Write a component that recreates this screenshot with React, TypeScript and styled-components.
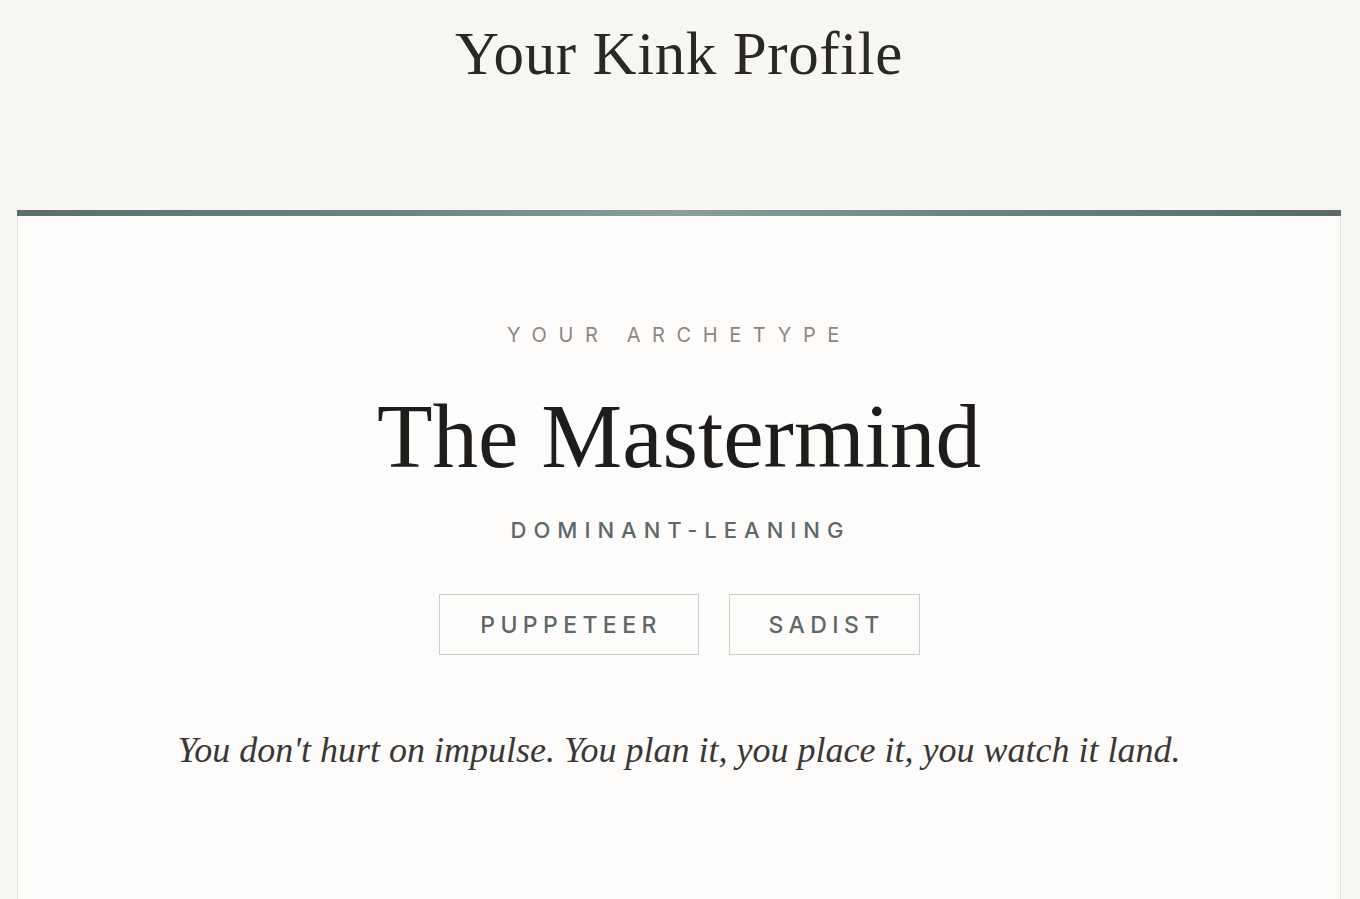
import React from "react";
import styled, { createGlobalStyle } from "styled-components";

const Global = createGlobalStyle`
  html, body { margin: 0; padding: 0; background: #f8f6f3; }
  body { font-family: "Liberation Serif", serif; }
`;

const Page = styled.div`
  min-height: 899px;
  padding: 0 19px 0 17px;
  display: flex;
  flex-direction: column;
  align-items: stretch;
`;

const PageTitle = styled.h1`
  margin: 22px 0 0;
  text-align: center;
  font-family: "Liberation Serif", serif;
  font-weight: 400;
  font-size: 61px;
  line-height: 64px;
  color: #2a2826;
  letter-spacing: 0.6px;
`;

const Card = styled.section`
  margin-top: 124px;
  background: #fdfcfa;
  border: 1px solid #e6e3de;
  border-top: none;
  position: relative;
  min-height: 690px;
  display: flex;
  flex-direction: column;
  align-items: center;
  &::before {
    content: "";
    position: absolute;
    left: -1px;
    right: -1px;
    top: 0;
    height: 6px;
    background: linear-gradient(90deg, #5a6e6e 0%, #6f8585 30%, #8a9e9e 50%, #6f8585 70%, #566a6a 100%);
  }
`;

const Eyebrow = styled.div`
  margin-top: 113px;
  font-family: "Inter", sans-serif;
  font-size: 20px;
  line-height: 24px;
  letter-spacing: 11.6px;
  color: #8c8782;
  text-transform: uppercase;
`;

const Archetype = styled.h2`
  margin: 40px 0 0;
  font-family: "Liberation Serif", serif;
  font-weight: 400;
  font-size: 91px;
  line-height: 100px;
  color: #1f1d1b;
`;

const Leaning = styled.div`
  margin-top: 30px;
  font-family: "Inter", sans-serif;
  font-size: 22px;
  line-height: 26px;
  font-weight: 500;
  letter-spacing: 7px;
  color: #5d6868;
  padding-left: 3px;
`;

const Tags = styled.div`
  margin-top: 51px;
  display: flex;
  gap: 30px;
`;

const Tag = styled.span<{ $w: number }>`
  width: ${(p) => p.$w}px;
  height: 61px;
  box-sizing: border-box;
  border: 1px solid #cfcdca;
  display: flex;
  align-items: center;
  justify-content: center;
  font-family: "Inter", sans-serif;
  font-size: 23px;
  font-weight: 500;
  letter-spacing: 5.4px;
  color: #5e6868;
  padding-left: 5px;
`;

const Quote = styled.p`
  margin: 73px 0 0;
  font-family: "Liberation Serif", serif;
  font-style: italic;
  font-size: 36px;
  line-height: 44px;
  color: #3a3836;
  text-align: center;
`;

export default function App() {
  return (
    <>
      <Global />
      <Page>
        <PageTitle>Your Kink Profile</PageTitle>
        <Card>
          <Eyebrow>Your Archetype</Eyebrow>
          <Archetype>The Mastermind</Archetype>
          <Leaning>DOMINANT-LEANING</Leaning>
          <Tags>
            <Tag $w={260}>PUPPETEER</Tag>
            <Tag $w={191}>SADIST</Tag>
          </Tags>
          <Quote>You don't hurt on impulse. You plan it, you place it, you watch it land.</Quote>
        </Card>
      </Page>
    </>
  );
}
